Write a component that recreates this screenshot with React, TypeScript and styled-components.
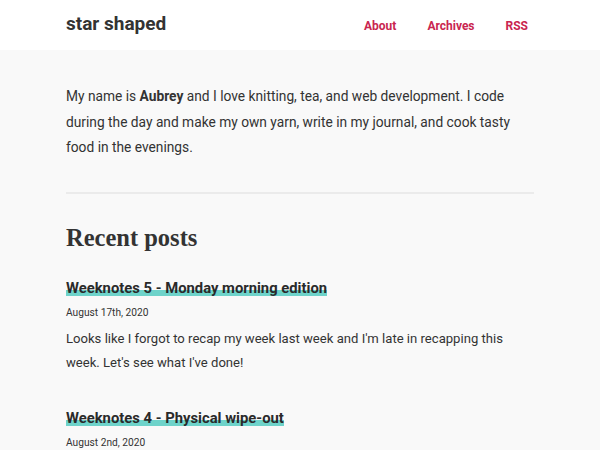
import React from 'react';
import styled, { createGlobalStyle } from 'styled-components';

const GlobalStyle = createGlobalStyle`
  html, body {
    margin: 0;
    padding: 0;
    background: #f9f9f9;
    color: #333;
    font-family: Roboto, 'Liberation Sans', sans-serif;
  }
`;

const Header = styled.header`
  background: #fff;
  height: 50px;
`;

const Wrap = styled.div`
  width: 468px;
  margin: 0 auto;
`;

const HeaderInner = styled(Wrap)`
  display: flex;
  align-items: center;
  justify-content: space-between;
  height: 100%;
`;

const SiteTitle = styled.a`
  font-size: 19px;
  font-weight: 700;
  color: #333;
  text-decoration: none;
  margin-top: -4px;
`;

const Nav = styled.nav`
  display: flex;
  gap: 31px;
  padding-right: 6px;
  margin-top: 2px;
`;

const NavLink = styled.a`
  color: #c9254f;
  font-size: 12px;
  font-weight: 700;
  text-decoration: none;
`;

const Main = styled(Wrap)`
  padding-top: 34px;
`;

const Intro = styled.p`
  margin: 0;
  font-size: 13.75px;
  line-height: 25.5px;
  padding-bottom: 31px;
  border-bottom: 2px solid #ebebeb;
`;

const SectionTitle = styled.h2`
  font-family: 'Liberation Serif', 'Times New Roman', serif;
  font-size: 24.5px;
  line-height: 28px;
  font-weight: 700;
  margin: 30px 0 26px;
`;

const Post = styled.article`
  margin-bottom: 33px;
`;

const PostHeading = styled.h3`
  margin: 0;
  font-size: 14.8px;
  line-height: 20px;
  font-weight: 700;
`;

const PostTitle = styled.a`
  color: #2a2a2a;
  text-decoration: none;
  background: linear-gradient(transparent 61%, #6ed3ca 61%, #6ed3ca 95%, transparent 95%);
`;

const PostDate = styled.div`
  font-size: 10.2px;
  line-height: 16px;
  margin-top: 7px;
`;

const Excerpt = styled.p`
  margin: 6px 0 0;
  font-size: 13.1px;
  line-height: 24px;
`;

const posts = [
  {
    title: 'Weeknotes 5 - Monday morning edition',
    date: 'August 17th, 2020',
    excerpt:
      "Looks like I forgot to recap my week last week and I'm late in recapping this week. Let's see what I've done!",
  },
  {
    title: 'Weeknotes 4 - Physical wipe-out',
    date: 'August 2nd, 2020',
    excerpt: 'Another week, another set of notes.',
  },
];

export default function App() {
  return (
    <>
      <GlobalStyle />
      <Header>
        <HeaderInner>
          <SiteTitle href="#">star shaped</SiteTitle>
          <Nav>
            <NavLink href="#">About</NavLink>
            <NavLink href="#">Archives</NavLink>
            <NavLink href="#">RSS</NavLink>
          </Nav>
        </HeaderInner>
      </Header>
      <Main>
        <Intro>
          My name is <strong>Aubrey</strong> and I love knitting, tea, and web development. I code
          during the day and make my own yarn, write in my journal, and cook tasty food in the
          evenings.
        </Intro>
        <SectionTitle>Recent posts</SectionTitle>
        {posts.map((p) => (
          <Post key={p.title}>
            <PostHeading>
              <PostTitle href="#">{p.title}</PostTitle>
            </PostHeading>
            <PostDate>{p.date}</PostDate>
            <Excerpt>{p.excerpt}</Excerpt>
          </Post>
        ))}
      </Main>
    </>
  );
}
